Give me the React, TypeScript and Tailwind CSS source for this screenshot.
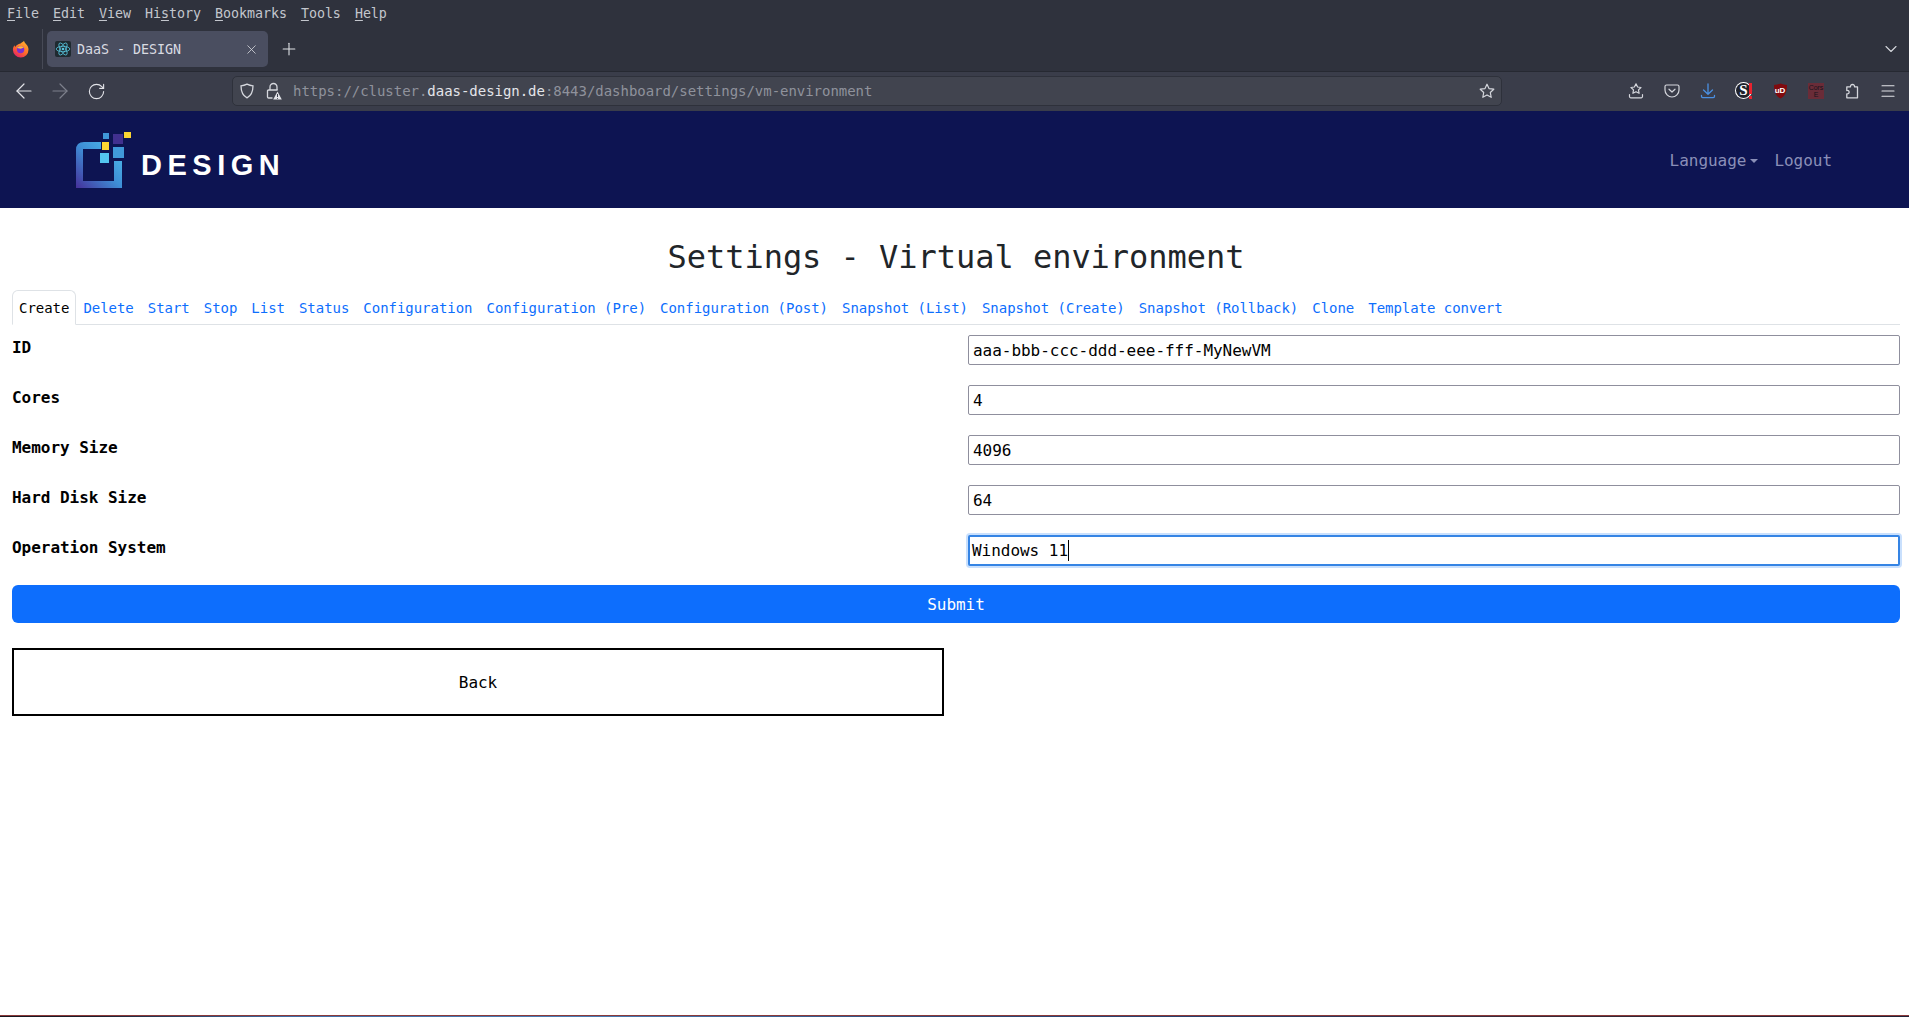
import { ArrowLeft, ArrowRight, ChevronDown, Menu, Plus, RotateCw, X } from "lucide-react";

const menus = [
    { before: "", key: "F", after: "ile" },
    { before: "", key: "E", after: "dit" },
    { before: "", key: "V", after: "iew" },
    { before: "Hi", key: "s", after: "tory" },
    { before: "", key: "B", after: "ookmarks" },
    { before: "", key: "T", after: "ools" },
    { before: "", key: "H", after: "elp" },
];

const tabs = [
    "Delete",
    "Start",
    "Stop",
    "List",
    "Status",
    "Configuration",
    "Configuration (Pre)",
    "Configuration (Post)",
    "Snapshot (List)",
    "Snapshot (Create)",
    "Snapshot (Rollback)",
    "Clone",
    "Template convert",
];

const fields = [
    { label: "ID", value: "aaa-bbb-ccc-ddd-eee-fff-MyNewVM" },
    { label: "Cores", value: "4" },
    { label: "Memory Size", value: "4096" },
    { label: "Hard Disk Size", value: "64" },
];

function FirefoxIcon() {
    return (
        <svg width="18" height="18" viewBox="0 0 18 18">
            <defs>
                <linearGradient id="fx" x1="0.8" y1="0" x2="0.2" y2="1">
                    <stop offset="0" stopColor="#ffb52e" />
                    <stop offset="0.55" stopColor="#ff6a2b" />
                    <stop offset="1" stopColor="#e31b6d" />
                </linearGradient>
            </defs>
            <path d="M12 0.8c0.4 1.8 1.6 2.6 2.6 3.9 1.2 1.4 1.9 3 1.9 4.9a7.8 7.8 0 0 1-15.6 0.2c0-1.8 0.6-3.4 1.7-4.6 0 0.9 0.3 1.4 0.8 1.8 0.7-2.6 4.4-3 5.5-3.8 1.2-0.7 2.4-1.4 3.1-2.4z" fill="url(#fx)" />
            <circle cx="8.6" cy="9.6" r="3.7" fill="#7b2fd0" />
            <path d="M5 8c1.5-2 5-2.400 6.800-0.400l-3 1.200z" fill="#ffbd3a" />
        </svg>
    );
}

function ReactFavicon() {
    return (
        <svg width="16" height="16" viewBox="0 0 16 16" className="shrink-0 rounded-[2px] bg-[#1f2a30]">
            <g fill="none" stroke="#58c4dc" strokeWidth="0.8">
                <ellipse cx="8" cy="8" rx="6.800" ry="2.700" />
                <ellipse cx="8" cy="8" rx="6.800" ry="2.700" transform="rotate(60 8 8)" />
                <ellipse cx="8" cy="8" rx="6.800" ry="2.700" transform="rotate(120 8 8)" />
            </g>
            <circle cx="8" cy="8" r="1.300" fill="#58c4dc" />
        </svg>
    );
}

function ShieldIcon() {
    return (
        <svg width="16" height="16" viewBox="0 0 16 16" fill="none" stroke="#d5d7dd" strokeWidth="1.300">
            <path d="M8 1.200c2 1 4 1.500 6 1.600 0 5.500-1.500 9.800-6 12-4.500-2.200-6-6.500-6-12 2-0.100 4-0.600 6-1.600z" />
        </svg>
    );
}

function LockWarningIcon() {
    return (
        <svg width="16" height="18" viewBox="0 0 16 18" fill="none">
            <path d="M4 8V5a3.500 3.500 0 0 1 7 0v3" stroke="#d5d7dd" strokeWidth="1.300" />
            <path d="M6.500 16H2.600A1.100 1.100 0 0 1 1.500 15V9.100A1.100 1.100 0 0 1 2.600 8h9" stroke="#d5d7dd" strokeWidth="1.300" />
            <path d="M11.500 9.500l4.300 8H7.200z" fill="#e2e3e8" />
            <path d="M11.500 12v3M11.500 16v0.800" stroke="#3b3f4c" strokeWidth="1" />
        </svg>
    );
}

function StarIcon() {
    return (
        <svg width="16" height="16" viewBox="0 0 16 16" fill="none" stroke="#d5d7dd" strokeWidth="1.200" strokeLinejoin="round">
            <path d="M8 1.200l2 4.400 4.800 0.600-3.500 3.300 0.900 4.800L8 11.900l-4.200 2.400 0.900-4.800L1.200 6.200 6 5.600z" />
        </svg>
    );
}

function SavedStarIcon() {
    return (
        <svg width="16" height="16" viewBox="0 0 16 16" fill="none" stroke="#d5d7dd" strokeWidth="1.200" strokeLinejoin="round">
            <path d="M8 0.800l1.600 3.200 3.400 0.500-2.500 2.400 0.600 3.400L8 8.700l-3.100 1.600 0.600-3.400L3 4.500l3.400-0.500z" />
            <path d="M1.500 11.500v2.100c0 0.700 0.500 1.200 1.200 1.200h10.600c0.700 0 1.200-0.500 1.200-1.200v-2.100" strokeLinecap="round" />
        </svg>
    );
}

function PocketIcon() {
    return (
        <svg width="16" height="16" viewBox="0 0 16 16" fill="none" stroke="#d5d7dd" strokeWidth="1.200" strokeLinecap="round" strokeLinejoin="round">
            <path d="M2.500 2h11A1.500 1.500 0 0 1 15 3.500V7a7 7 0 0 1-14 0V3.500A1.500 1.500 0 0 1 2.500 2z" />
            <path d="M5 6.200l3 2.800 3-2.800" />
        </svg>
    );
}

function DownloadIcon() {
    return (
        <svg width="16" height="16" viewBox="0 0 16 16" fill="none" stroke="#4a90e2" strokeWidth="1.300" strokeLinecap="round" strokeLinejoin="round">
            <path d="M8 1v10M3.500 7L8 11.300 12.500 7" />
            <path d="M1.500 12.500v0.800c0 0.800 0.500 1.300 1.200 1.300h10.600c0.700 0 1.200-0.500 1.200-1.300v-0.800" />
        </svg>
    );
}

function PuzzleIcon() {
    return (
        <svg width="16" height="16" viewBox="0 0 16 16" fill="none" stroke="#d5d7dd" strokeWidth="1.300" strokeLinejoin="round">
            <path d="M8.500 1.500c-1.400 0-2.200 1-2 2.300H2.800v3.700c1.500-0.200 2.300 0.600 2.300 1.700S4.300 11 2.800 10.800v4h10.700V3.800H10.500c0.200-1.300-0.600-2.300-2-2.300z" />
        </svg>
    );
}

function SiteMarkIcon() {
    return (
        <div className="relative h-4 w-4">
            <div className="absolute left-0 top-0 flex h-[15px] w-[15px] items-center justify-center rounded-full bg-[#20232c] font-['Liberation_Serif',serif] text-[15px] font-bold leading-none text-white ring-1 ring-white">
                S
            </div>
            <div className="absolute right-0 top-0 h-[11px] w-[3px] bg-[#e8222e]" />
            <div className="absolute bottom-0 right-0 h-[3px] w-[3px] bg-[#e8222e]" />
        </div>
    );
}

function UblockIcon() {
    return (
        <div className="relative flex h-4 w-4 items-center justify-center">
            <svg width="15" height="16" viewBox="0 0 14 16" className="absolute">
                <path d="M7 0.500c2 0.900 4.200 1.300 6.500 1.400 0 6-1.500 11-6.500 13.600C2 12.900 0.500 7.900 0.500 1.900 2.800 1.800 5 1.400 7 0.500z" fill="#800a0e" />
            </svg>
            <span className="relative font-['Liberation_Sans',sans-serif] text-[8px] font-bold leading-none text-white">uD</span>
        </div>
    );
}

function CorsIcon() {
    return (
        <div className="flex h-4 w-4 flex-col items-center justify-center bg-[#6a2c38] font-['Liberation_Sans',sans-serif] text-[7px] leading-[7.500px] text-[#17141c]">
            <span>Cors</span>
            <span>E</span>
        </div>
    );
}

function ToolbarButton({ children }: { children: React.ReactNode }) {
    return <div className="flex h-9 w-9 items-center justify-center">{children}</div>;
}

function BrowserChrome() {
    return (
        <div className="shrink-0 bg-[#2f323d] text-[13.330px] text-[#d5d7dd]">
            <div className="flex h-[27px] items-center pl-0">
                {menus.map((m) => (
                    <span key={m.key + m.after} className="px-[7px] leading-[20px] text-[#c3c6cd]">
                        {m.before}
                        <span className="underline underline-offset-2">{m.key}</span>
                        {m.after}
                    </span>
                ))}
            </div>

            <div className="flex h-[44px] items-center">
                <div className="flex h-10 w-[43px] items-center justify-center border-r border-[#474a56] pl-[0px]">
                    <FirefoxIcon />
                </div>
                <div className="ml-1 flex h-9 w-[221px] items-center rounded-[5px] bg-[#4a4e60] pl-2 pr-[9px]">
                    <ReactFavicon />
                    <span className="ml-[6px] mt-px flex-1 whitespace-nowrap text-[#d9dbe2]">DaaS - DESIGN</span>
                    <X size={15} strokeWidth={1.300} />
                </div>
                <Plus size={20} strokeWidth={1.300} className="ml-[11px] text-[#e2e3e8]" />
                <ChevronDown size={20} strokeWidth={1.300} className="ml-auto mr-2" />
            </div>

            <div className="flex h-10 items-center border-t border-[#262932] bg-[#3a3d4a] pb-px pl-[6px] pr-[3px]">
                <ToolbarButton>
                    <ArrowLeft size={24} strokeWidth={1.200} className="text-[#e2e3e8]" />
                </ToolbarButton>
                <ToolbarButton>
                    <ArrowRight size={24} strokeWidth={1.200} className="text-[#7d808c]" />
                </ToolbarButton>
                <ToolbarButton>
                    <RotateCw size={19} strokeWidth={1.400} className="text-[#e2e3e8]" />
                </ToolbarButton>

                <div className="ml-[118px] flex h-[30px] w-[1270px] items-center rounded-[5px] border border-[#2e313b] bg-[#41444f] pl-[6px] pr-[6px] text-sm">
                    <ShieldIcon />
                    <div className="ml-[11px]">
                        <LockWarningIcon />
                    </div>
                    <span className="ml-[11px] whitespace-nowrap text-[#8f929c]">
                        https://cluster.<span className="text-[#e4e5ea]">daas-design.de</span>:8443/dashboard/settings/vm-environment
                    </span>
                    <div className="ml-auto">
                        <StarIcon />
                    </div>
                </div>

                <div className="ml-auto flex items-center">
                    <ToolbarButton>
                        <SavedStarIcon />
                    </ToolbarButton>
                    <ToolbarButton>
                        <PocketIcon />
                    </ToolbarButton>
                    <ToolbarButton>
                        <DownloadIcon />
                    </ToolbarButton>
                    <ToolbarButton>
                        <SiteMarkIcon />
                    </ToolbarButton>
                    <ToolbarButton>
                        <UblockIcon />
                    </ToolbarButton>
                    <ToolbarButton>
                        <CorsIcon />
                    </ToolbarButton>
                    <ToolbarButton>
                        <PuzzleIcon />
                    </ToolbarButton>
                    <ToolbarButton>
                        <Menu size={18} strokeWidth={1.500} className="text-[#e2e3e8]" />
                    </ToolbarButton>
                </div>
            </div>
        </div>
    );
}

function LogoMark() {
    return (
        <svg width="56" height="60" viewBox="0 0 56 60" className="shrink-0">
            <defs>
                <linearGradient id="bracket" x1="0" y1="1" x2="1" y2="0">
                    <stop offset="0" stopColor="#45309a" />
                    <stop offset="0.5" stopColor="#3e8ed6" />
                    <stop offset="1" stopColor="#4fc3ee" />
                </linearGradient>
            </defs>
            <path d="M25 12H8Q0 12 0 20V58H46V31H38V51H7V19H25Z" fill="url(#bracket)" />
            <rect x="27" y="3" width="6" height="6" fill="#3f97d8" />
            <rect x="37" y="4" width="10" height="10" fill="#41308f" />
            <rect x="48" y="2" width="7" height="6" fill="#fbd533" />
            <rect x="26" y="12" width="7" height="8" fill="#fbd533" />
            <rect x="24" y="23" width="9" height="10" fill="#53c5ef" />
            <rect x="37" y="17" width="11" height="11" fill="#4099d9" />
        </svg>
    );
}

function Navbar() {
    return (
        <nav className="flex h-[97px] shrink-0 items-center justify-between bg-[#0d1452] pl-[76px] pr-[69px]">
            <div className="flex items-center">
                <LogoMark />
                <span className="ml-[9px] mt-3 font-['Liberation_Sans',sans-serif] text-[29px] font-bold leading-none tracking-[5.500px] text-white">
                    DESIGN
                </span>
            </div>
            <div className="mt-[2px] flex items-center text-[#8a8fb8]">
                <span className="flex items-center px-2">
                    Language
                    <span className="ml-1 h-0 w-0 border-x-[4px] border-t-[4px] border-x-transparent border-t-[#8a8fb8]" />
                </span>
                <span className="px-2">Logout</span>
            </div>
        </nav>
    );
}

function SettingsForm() {
    return (
        <main className="flex-1 bg-white pl-3 pr-[9px] text-black">
            <h1 className="mt-[30px] text-center text-[32px] leading-[38px] text-[#212529]">
                Settings - Virtual environment
            </h1>

            <div className="mt-[14px] flex h-[35px] border-b border-[#dee2e6] text-sm">
                <div className="h-[35px] rounded-t-md border border-[#dee2e6] border-b-white bg-white px-[6px] leading-[34px] text-black">
                    Create
                </div>
                {tabs.map((tab) => (
                    <div key={tab} className="whitespace-nowrap border border-transparent px-[6px] leading-[34px] text-[#0d6efd]">
                        {tab}
                    </div>
                ))}
            </div>

            <form className="mt-[10px]">
                {fields.map((f) => (
                    <div key={f.label} className="mb-5 grid grid-cols-2 gap-6">
                        <label className="pt-px font-bold leading-6">{f.label}</label>
                        <input
                            readOnly
                            defaultValue={f.value}
                            className="h-[30px] w-full rounded-[2px] border border-[#8f8f9d] bg-white pl-1 pr-[3px] text-black outline-none"
                        />
                    </div>
                ))}
                <div className="mb-[19px] grid grid-cols-2 gap-6">
                    <label className="pt-px font-bold leading-6">Operation System</label>
                    <div className="flex h-[31px] w-full items-center rounded-[2px] border-2 border-[#3584e4] bg-white pl-[2px] ring-2 ring-[#c9e0fd]">
                        Windows 11
                        <span className="h-[21px] w-px bg-black" />
                    </div>
                </div>
                <button type="button" className="block h-[38px] w-full rounded-md bg-[#0d6efd] pt-px text-white">
                    Submit
                </button>
            </form>

            <div className="mt-[25px] grid grid-cols-2 gap-6">
                <button type="button" className="h-[68px] border-2 border-black bg-white pt-px text-black">
                    Back
                </button>
            </div>
        </main>
    );
}

export default function App() {
    return (
        <div className="flex h-[1017px] w-full flex-col overflow-hidden bg-white font-['DejaVu_Sans_Mono','Liberation_Mono',monospace] tracking-[-0.002em]">
            <BrowserChrome />
            <Navbar />
            <SettingsForm />
            <div className="h-px shrink-0 bg-[#8b3a3a]" />
            <div className="h-px shrink-0 bg-[linear-gradient(90deg,#15161f_0%,#1c2030_5%,#3f6ea8_15%,#4a7fb8_30%,#2d4a7a_50%,#27406f_65%,#3a2a38_80%,#1e2238_100%)]" />
        </div>
    );
}
